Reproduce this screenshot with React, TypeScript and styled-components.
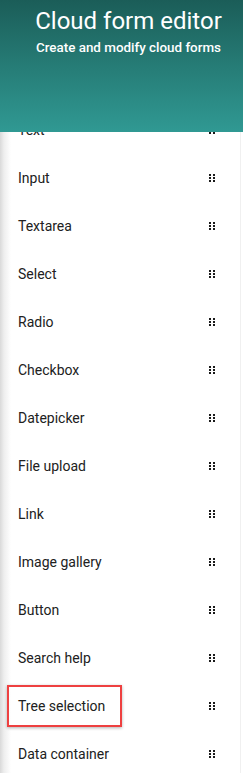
import React from "react";
import styled, { createGlobalStyle } from "styled-components";

const Global = createGlobalStyle`
  html, body { margin: 0; padding: 0; background: #ffffff; }
  body { font-family: Roboto, "Noto Sans", Arial, sans-serif; overflow: hidden; }
`;

const Page = styled.div`
  width: 243px;
  height: 773px;
  overflow: hidden;
  position: relative;
  background: #ffffff;
`;

const Header = styled.header`
  position: relative;
  z-index: 2;
  height: 132px;
  box-sizing: border-box;
  padding: 7px 0 0 14px;
  display: flex;
  flex-direction: column;
  align-items: center;
  background: linear-gradient(180deg, #1b5d58 0%, #267c76 50%, #309993 100%);
  color: #ffffff;
`;

const Title = styled.h1`
  margin: 0;
  font-size: 24px;
  line-height: 28px;
  font-weight: 400;
  letter-spacing: 0;
`;

const Subtitle = styled.p`
  margin: 5px 0 0;
  font-size: 13.4px;
  line-height: 16px;
  font-weight: 500;
`;

const List = styled.ul`
  list-style: none;
  margin: -26px 2px 0 0;
  padding: 0;
  position: relative;
  z-index: 1;
  background: linear-gradient(90deg, #d9d9d9 0px, #eeeeee 4px, #ffffff 11px);
  border-right: 1px solid #f0f0f0;
`;

const Row = styled.li`
  position: relative;
  height: 48px;
  display: flex;
  align-items: center;
  justify-content: space-between;
  padding: 0 25px 0 18px;
`;

const Label = styled.span`
  font-size: 14px;
  color: #212121;
`;

const Highlight = styled.span`
  position: absolute;
  left: 7px;
  top: 3px;
  width: 115px;
  height: 42px;
  box-sizing: border-box;
  border: 2px solid #ee4040;
  box-shadow: 0 1px 3px rgba(0, 0, 0, 0.3);
  pointer-events: none;
`;

const Grip = () => (
  <svg width="6" height="8" viewBox="0 0 6 8" aria-hidden="true">
    {[0, 3, 6].map((y) =>
      [0, 4].map((x) => (
        <rect key={`${x}-${y}`} x={x} y={y} width="2" height="2" fill="#1a1a1a" />
      ))
    )}
  </svg>
);

const items = [
  "Text",
  "Input",
  "Textarea",
  "Select",
  "Radio",
  "Checkbox",
  "Datepicker",
  "File upload",
  "Link",
  "Image gallery",
  "Button",
  "Search help",
  "Tree selection",
  "Data container",
];

export default function App() {
  return (
    <Page>
      <Global />
      <Header>
        <Title>Cloud form editor</Title>
        <Subtitle>Create and modify cloud forms</Subtitle>
      </Header>
      <List>
        {items.map((it) => (
          <Row key={it}>
            <Label>{it}</Label>
            <Grip />
            {it === "Tree selection" && <Highlight />}
          </Row>
        ))}
      </List>
    </Page>
  );
}
